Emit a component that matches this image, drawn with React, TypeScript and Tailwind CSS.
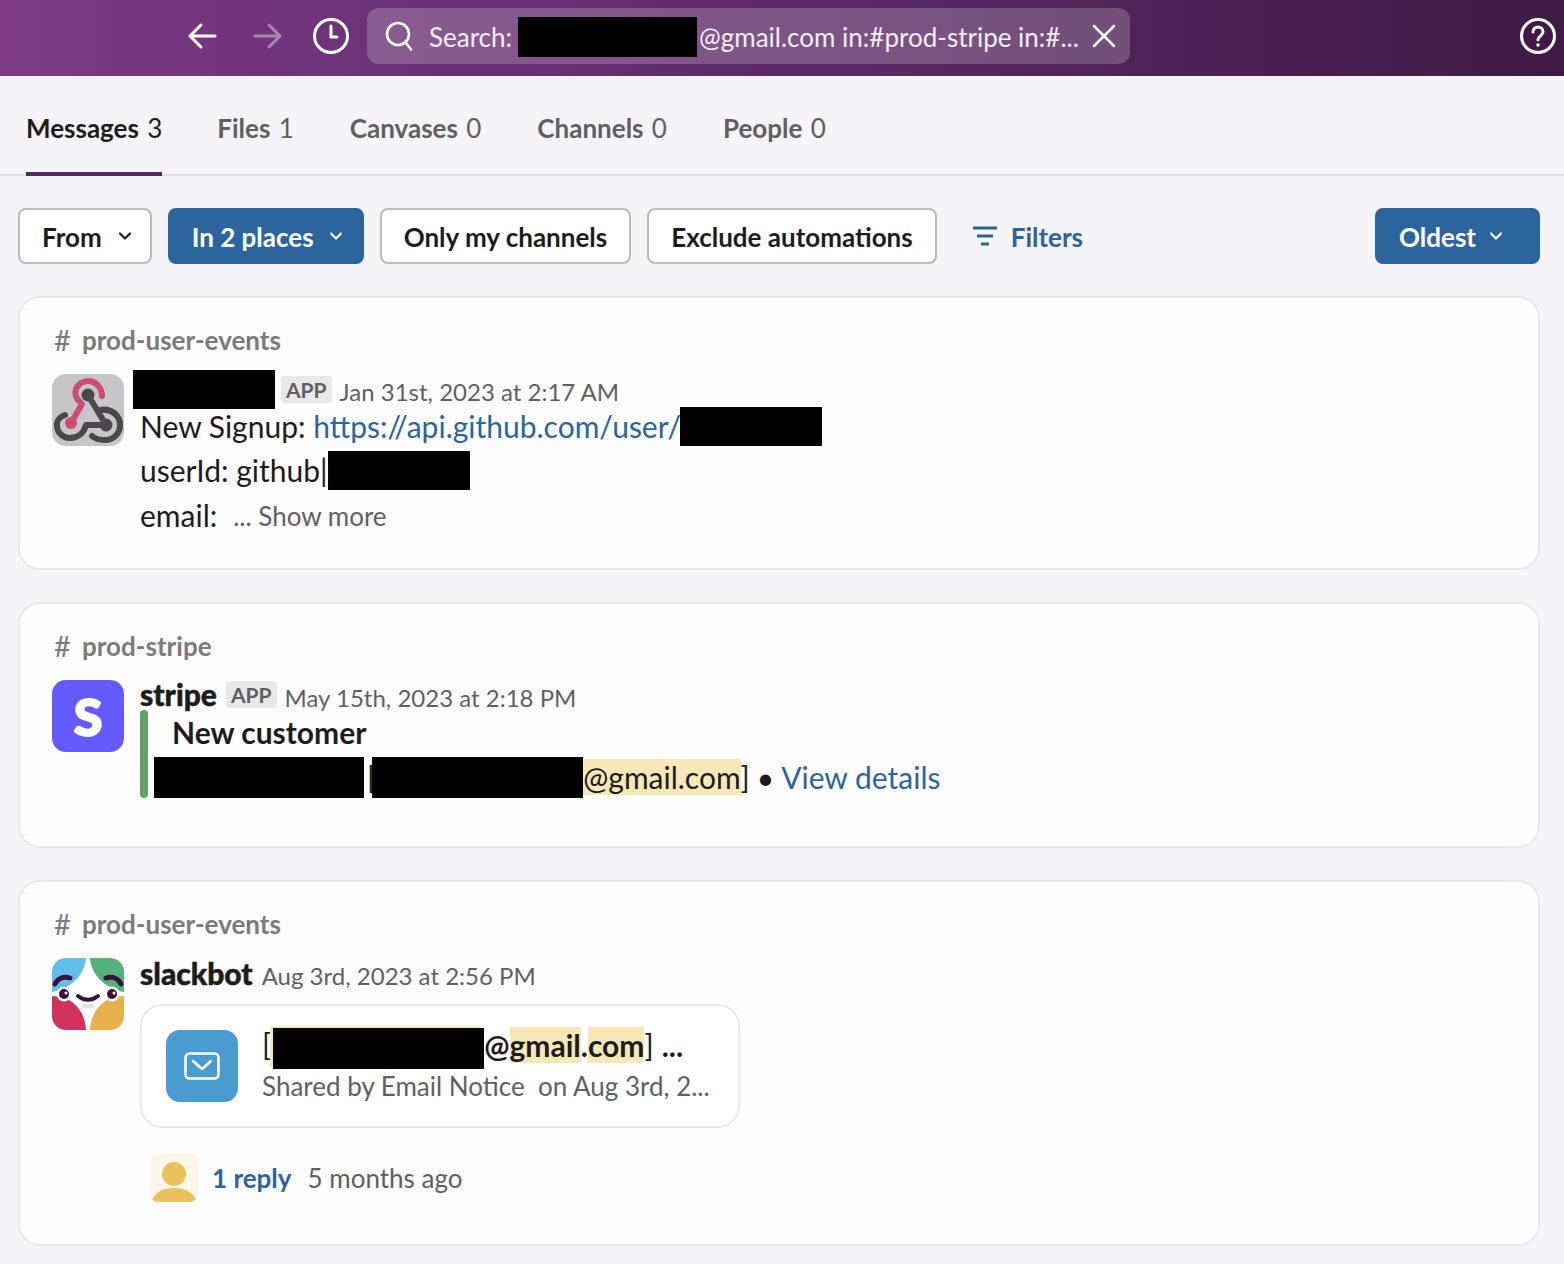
import React from "react";
import { ChevronDown } from "lucide-react";

const Black = ({ w, h, cls = "" }: { w: number; h: number; cls?: string }) => (
  <span className={`inline-block bg-black shrink-0 ${cls}`} style={{ width: w, height: h }} />
);

const Tab = ({ label, n, active }: { label: string; n: number; active?: boolean }) => (
  <div className={`relative h-full flex items-center text-[26px] ${active ? "text-[#1d1c1d] -mr-[1px]" : "text-[#616061]"}`}>
    <span className="font-bold pt-[6px]">{label}&nbsp;<span className="font-normal ml-[2px]">{n}</span></span>
    {active && <div className="absolute left-0 right-0 -bottom-[2px] h-[4px] bg-[#5a2565]" />}
  </div>
);

const Pill = ({ children, blue }: { children: React.ReactNode; blue?: boolean }) => (
  <div className={`h-[56px] rounded-[8px] flex items-center text-[26px] font-bold ${blue ? "bg-[#2c659d] text-white" : "bg-white border-2 border-[#bcbbbc] text-[#1d1c1d]"}`}>
    {children}
  </div>
);

const Channel = ({ name }: { name: string }) => (
  <div className="flex text-[26px] leading-[32px] font-bold text-[#7c7b7c]">
    <span className="w-[28px] shrink-0 text-[29px] font-normal">#</span>
    <span>{name}</span>
  </div>
);

const Heavy = ({ children }: { children: React.ReactNode }) => (
  <span className="text-[30px] font-black text-[#1d1c1d] [-webkit-text-stroke:0.5px_#1d1c1d]">{children}</span>
);

const App = () => (
  <div className="w-[1564px] h-[1264px] overflow-hidden bg-[#f5f4f8]" style={{ fontFamily: "Lato, 'Open Sans', sans-serif" }}>
    <header className="h-[76px] pb-[4px] flex items-center bg-gradient-to-r from-[#7c3a85] via-[#5d2a68] to-[#3f1a45] text-white">
      <div className="w-[187px] shrink-0" />
      <svg width="32" height="32" viewBox="0 0 32 32" fill="none" stroke="white" strokeWidth="3" strokeLinecap="round" strokeLinejoin="round"><path d="M28 16H4M14 5 3 16l11 11" /></svg>
      <svg className="ml-[32px] opacity-40" width="32" height="32" viewBox="0 0 32 32" fill="none" stroke="white" strokeWidth="3" strokeLinecap="round" strokeLinejoin="round"><path d="M4 16h24M18 5l11 11-11 11" /></svg>
      <svg className="ml-[29px]" width="38" height="38" viewBox="0 0 38 38" fill="none" stroke="white" strokeWidth="3" strokeLinecap="round" strokeLinejoin="round"><circle cx="19" cy="19" r="16.5" /><path d="M19 9v11h6" /></svg>
      <div className="ml-[17px] w-[763px] h-[56px] rounded-[12px] bg-white/20 flex items-center pl-[17px] text-[26px] text-white/90">
        <svg width="30" height="34" viewBox="0 0 30 34" fill="none" stroke="white" strokeWidth="2.6" strokeLinecap="round"><circle cx="14" cy="15" r="11" /><path d="M21.500 23.500l5.500 7" /></svg>
        <span className="ml-[15px] mt-[2px]">Search:</span>
        <Black w={179} h={40} cls="ml-[6px] mt-[2px]" />
        <span className="ml-[2px] mt-[2px] flex-1 whitespace-nowrap">@gmail.com in:#prod-stripe in:#...</span>
        <svg className="mr-[14px] shrink-0" width="24" height="24" viewBox="0 0 24 24" fill="none" stroke="white" strokeWidth="2.6" strokeLinecap="round"><path d="M2 2l20 20M22 2 2 22" /></svg>
      </div>
      <div className="flex-1" />
      <svg className="mr-[7px]" width="38" height="38" viewBox="0 0 38 38" fill="none" stroke="white" strokeWidth="3" strokeLinecap="round" strokeLinejoin="round"><circle cx="19" cy="19" r="16.5" /><path d="M14 15c0-3 2.300-5 5-5s5 2 5 4.800c0 4-5 4-5 8" /><circle cx="19" cy="28" r="1" fill="white" strokeWidth="1.500" /></svg>
    </header>

    <nav className="h-[100px] flex items-stretch gap-[56px] pl-[26px] border-b-2 border-[#e0dfe2]">
      <Tab label="Messages" n={3} active />
      <Tab label="Files" n={1} />
      <Tab label="Canvases" n={0} />
      <Tab label="Channels" n={0} />
      <Tab label="People" n={0} />
    </nav>

    <div className="px-[18px] pt-[32px]">
      <div className="flex items-center gap-[16px] mr-[6px]">
        <Pill><span className="pl-[22px] pt-[3px]">From</span><ChevronDown size={20} strokeWidth={2.6} className="ml-[13px] mr-[15px]" /></Pill>
        <Pill blue><span className="pl-[24px] pt-[3px]">In 2 places</span><ChevronDown size={20} strokeWidth={2.6} className="ml-[12px] mr-[18px]" /></Pill>
        <Pill><span className="px-[22px] pt-[3px]">Only my channels</span></Pill>
        <Pill><span className="px-[22px] pt-[3px]">Exclude automations</span></Pill>
        <div className="ml-[19px] flex items-center text-[26px] font-bold text-[#2c659d]">
          <svg width="26" height="22" viewBox="0 0 26 22" fill="none" stroke="#2c659d" strokeWidth="3"><path d="M1 3h24M5 11h16M9 19h8" /></svg>
          <span className="ml-[13px] pt-[3px]">Filters</span>
        </div>
        <div className="flex-1" />
        <Pill blue><span className="pl-[24px] pt-[2px]">Oldest</span><ChevronDown size={20} strokeWidth={2.6} className="ml-[10px] mr-[34px]" /></Pill>
      </div>

      <div className="mt-[32px] flex flex-col gap-[32px] mr-[6px]">
        {/* Card 1 */}
        <section className="h-[274px] bg-[#fdfdfe] border-2 border-[#e9e8ec] rounded-[22px] pl-[32px] pt-[26px]">
          <div className="pl-[2px]"><Channel name="prod-user-events" /></div>
          <div className="flex mt-[15px]">
            <div className="w-[72px] h-[72px] mt-[3px] rounded-[14px] bg-[#c6c5c7] shrink-0">
              <svg width="72" height="72" viewBox="0 0 72 72" fill="none" strokeWidth="6" strokeLinecap="round" strokeLinejoin="round">
                <path d="M36 21 54 51H36" stroke="#4a4849" />
                <path d="M13 41C7 43 4 48 5 53c1 7 7 11 13 11 8 0 14-5 16-13" stroke="#4a4849" />
                <path d="M48 36c11-2 20 5 20 15 0 9-7 15-15 15-5 0-10-1-13-4" stroke="#4a4849" />
                <circle cx="36" cy="21" r="6.500" fill="#4a4849" />
                <circle cx="54" cy="51" r="6.500" fill="#4a4849" />
                <path d="M19 49 30 30c-5-4-8-9-6-15 2-5 7-8 12-8 8 0 14 7 14 15" stroke="#cc4d73" />
                <circle cx="19" cy="49" r="6" fill="#cc4d73" stroke="none" />
              </svg>
            </div>
            <div className="ml-[16px] flex-1 -mt-[1px]">
              <div className="flex items-center h-[39px] -ml-[7px]">
                <Black w={142} h={39} />
                <span className="ml-[6px] h-[27px] px-[5px] rounded-[4px] bg-[#e8e8e8] text-[#616061] text-[21px] leading-[27px] font-bold">APP</span>
                <span className="ml-[8px] mt-[5px] text-[24px] text-[#616061]">Jan 31st, 2023 at 2:17 AM</span>
              </div>
              <div className="text-[30px] leading-[44px] text-[#1d1c1d] -mt-[3px]">
                <div className="flex items-center h-[40px]">New Signup:&nbsp;<span className="text-[#2c659d] -mr-[1px]">https://api.github.com/user/</span><Black w={142} h={39} /></div>
                <div className="flex items-center h-[44px] mt-[2px]">userId: github|<Black w={142} h={39} cls="ml-[1px]" /></div>
                <div className="flex items-center h-[44px] mt-[1px]">email:<span className="ml-[16px] text-[26px] text-[#616061] mt-[1px]">... Show more</span></div>
              </div>
            </div>
          </div>
        </section>

        {/* Card 2 */}
        <section className="h-[246px] bg-[#fdfdfe] border-2 border-[#e9e8ec] rounded-[22px] pl-[32px] pt-[26px]">
          <div className="pl-[2px]"><Channel name="prod-stripe" /></div>
          <div className="flex mt-[15px]">
            <div className="w-[72px] h-[72px] mt-[3px] rounded-[14px] bg-[#635bff] shrink-0 flex items-center justify-center text-white text-[52px] font-black leading-none [-webkit-text-stroke:2px_white]">S</div>
            <div className="ml-[16px] flex-1">
              <div className="flex items-center h-[30px] mt-[2px]">
                <Heavy>stripe</Heavy>
                <span className="ml-[9px] h-[27px] px-[5px] rounded-[4px] bg-[#e8e8e8] text-[#616061] text-[21px] leading-[27px] font-bold">APP</span>
                <span className="ml-[8px] mt-[8px] text-[24px] text-[#616061]">May 15th, 2023 at 2:18 PM</span>
              </div>
              <div className="flex mt-[-2px]">
                <div className="w-[8px] h-[88px] mt-[3px] rounded-full bg-[#68a06c] shrink-0" />
                <div className="ml-[6px] text-[30px] text-[#1d1c1d]">
                  <div className="pl-[18px] h-[44px] mt-[3px] leading-[44px] font-bold">New customer</div>
                  <div className="flex items-center h-[44px] mt-[1px]">
                    <Black w={210} h={41} />
                    <span className="ml-[3px]">[</span>
                    <Black w={211} h={41} cls="-ml-[4px]" />
                    <span className="bg-[#f8e8b8] h-[36px] leading-[36px]">@gmail.com</span>
                    <span>]</span>
                    <span className="ml-[7px]">•</span>
                    <span className="ml-[7px] text-[#2c659d]">View details</span>
                  </div>
                </div>
              </div>
            </div>
          </div>
        </section>

        {/* Card 3 */}
        <section className="h-[366px] bg-[#fdfdfe] border-2 border-[#e9e8ec] rounded-[22px] pl-[32px] pt-[26px]">
          <div className="pl-[2px]"><Channel name="prod-user-events" /></div>
          <div className="flex mt-[15px]">
            <div className="w-[72px] h-[72px] mt-[3px] shrink-0 rounded-[14px] overflow-hidden">
              <svg width="72" height="72" viewBox="0 0 72 72">
                <rect width="72" height="72" fill="#fff" />
                <path d="M0 0H34C33 16 20 30 0 34Z" fill="#62bdeb" />
                <path d="M38 0H72V34C52 30 39 16 38 0Z" fill="#56b07e" />
                <path d="M0 38C20 38 33 52 34 72H0Z" fill="#cf335c" />
                <path d="M72 38C52 38 39 52 38 72H72Z" fill="#e6b14b" />
                <path d="M3 26c3-6 9-8 15-6M69 26c-3-6-9-8-15-6" stroke="#3a1139" strokeWidth="5" fill="none" strokeLinecap="round" />
                <circle cx="12" cy="36" r="7.500" fill="#fff" />
                <circle cx="60" cy="36" r="7.500" fill="#fff" />
                <circle cx="12" cy="36" r="5" fill="#3a1139" />
                <circle cx="60" cy="36" r="5" fill="#3a1139" />
                <circle cx="14" cy="35" r="1.500" fill="#fff" />
                <circle cx="62" cy="35" r="1.500" fill="#fff" />
                <path d="M26 38c6 5 14 5 20 0" stroke="#3a1139" strokeWidth="4" fill="none" strokeLinecap="round" />
                <rect x="30" y="46" width="12" height="4" rx="2" fill="#e4e4e4" />
              </svg>
            </div>
            <div className="ml-[16px] flex-1">
              <div className="flex items-center h-[30px] mt-[3px]">
                <Heavy>slackbot</Heavy>
                <span className="ml-[9px] mt-[6px] text-[24px] text-[#616061]">Aug 3rd, 2023 at 2:56 PM</span>
              </div>
              <div className="mt-[16px] w-[600px] h-[124px] rounded-[22px] bg-white border-2 border-[#e9e8ec] flex items-center pl-[24px]">
                <div className="w-[72px] h-[72px] rounded-[14px] bg-[#4a9bcf] shrink-0 flex items-center justify-center">
                  <svg width="36" height="28" viewBox="0 0 36 28" fill="none" stroke="white" strokeWidth="2.500" strokeLinecap="round" strokeLinejoin="round"><rect x="1.500" y="1.500" width="33" height="25" rx="4" /><path d="M9 9l9 8 9-8" /></svg>
                </div>
                <div className="ml-[24px] min-w-0 -mt-[2px]">
                  <div className="flex items-center h-[42px] text-[30px] font-bold text-[#1d1c1d]">
                    <span className="font-normal mb-[8px]">[</span>
                    <Black w={211} h={41} cls="ml-[2px] shadow-[-3px_-2px_0_#f8e8b8]" />
                    <div className="flex items-center mb-[6px]">
                      <span>@</span><span className="bg-[#f8e8b8] h-[36px] leading-[36px]">gmail</span><span>.</span><span className="bg-[#f8e8b8] h-[36px] leading-[36px]">com</span><span className="font-normal">]</span><span className="ml-[8px]">...</span>
                    </div>
                  </div>
                  <div className="text-[26px] leading-[34px] text-[#616061] whitespace-nowrap">Shared by Email Notice&nbsp; on Aug 3rd, 2...</div>
                </div>
              </div>
              <div className="mt-[26px] ml-[10px] flex items-center h-[48px]">
                <div className="w-[48px] h-[48px] rounded-[8px] bg-[#fbf8ea] overflow-hidden shrink-0">
                  <svg width="48" height="48" viewBox="0 0 48 48"><circle cx="24" cy="20" r="12" fill="#ebc15b" /><ellipse cx="24" cy="48" rx="22" ry="14" fill="#ebc15b" /></svg>
                </div>
                <span className="ml-[14px] text-[26px] font-bold text-[#2c659d]">1 reply</span>
                <span className="ml-[16px] text-[26px] text-[#616061]">5 months ago</span>
              </div>
            </div>
          </div>
        </section>
      </div>
    </div>
  </div>
);

export default App;
